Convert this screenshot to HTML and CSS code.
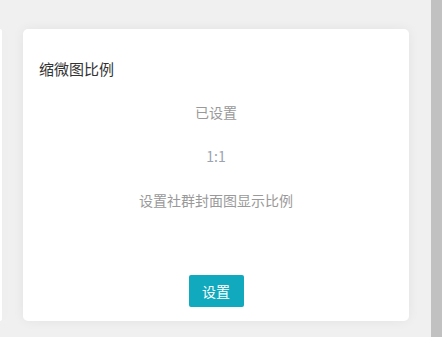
FILE: index.html
```html
<!DOCTYPE html>
<html lang="zh-CN">
	<head>
		<meta charset="UTF-8" />
		<meta name="viewport" content="width=device-width, initial-scale=1.0" />
		<title>缩微图比例</title>
		<link rel="stylesheet" href="styles.css">
	</head>
	<body>
		<div class="page">
			<div class="main">
				<div class="card-row">
					<div class="card card-prev"></div>
					<div class="card">
						<h3 class="card-title">缩微图比例</h3>
						<div class="card-body">
							<p class="status">已设置</p>
							<p class="ratio">1:1</p>
							<p class="desc">设置社群封面图显示比例</p>
							<button class="btn-set" type="button">设置</button>
						</div>
					</div>
				</div>
			</div>
			<div class="scrollbar"></div>
		</div>
	</body>
</html>
```

FILE: styles.css
```css
body {
	margin: 0;
	font-family: "Noto Sans CJK SC", "Liberation Sans", sans-serif;
	background-color: #f0f0f0;
}

.page {
	display: flex;
	height: 337px;
	overflow: hidden;
}

.main {
	flex: 1;
	padding-top: 29px;
	overflow: hidden;
}

.card-row {
	display: flex;
	gap: 21px;
}

.card {
	box-sizing: border-box;
	width: 386px;
	height: 292px;
	padding: 30px 16px 14px;
	background-color: #fff;
	border-radius: 5px;
	box-shadow: 0 0 12px rgba(0, 0, 0, 0.06);
	flex-shrink: 0;
}

.card-prev {
	width: 2px;
	padding: 0;
	border-radius: 0 5px 5px 0;
}

.card-title {
	margin: 0;
	font-size: 15px;
	font-weight: normal;
	line-height: 20px;
	color: #333;
}

.card-body {
	display: flex;
	flex-direction: column;
	align-items: center;
}

.card-body p {
	margin: 24px 0 0;
	font-size: 14px;
	line-height: 20px;
	color: #999;
}

.card-body .status {
	margin-top: 23px;
}

.card-body .ratio {
	color: #9ba3b0;
}

.btn-set {
	margin-top: 65px;
	width: 55px;
	height: 32px;
	padding: 0;
	border: none;
	border-radius: 2px;
	background-color: #10a9bd;
	color: #fff;
	font-family: inherit;
	font-size: 14px;
	cursor: pointer;
}

.scrollbar {
	width: 11px;
	background-color: #c1c1c1;
}
```
